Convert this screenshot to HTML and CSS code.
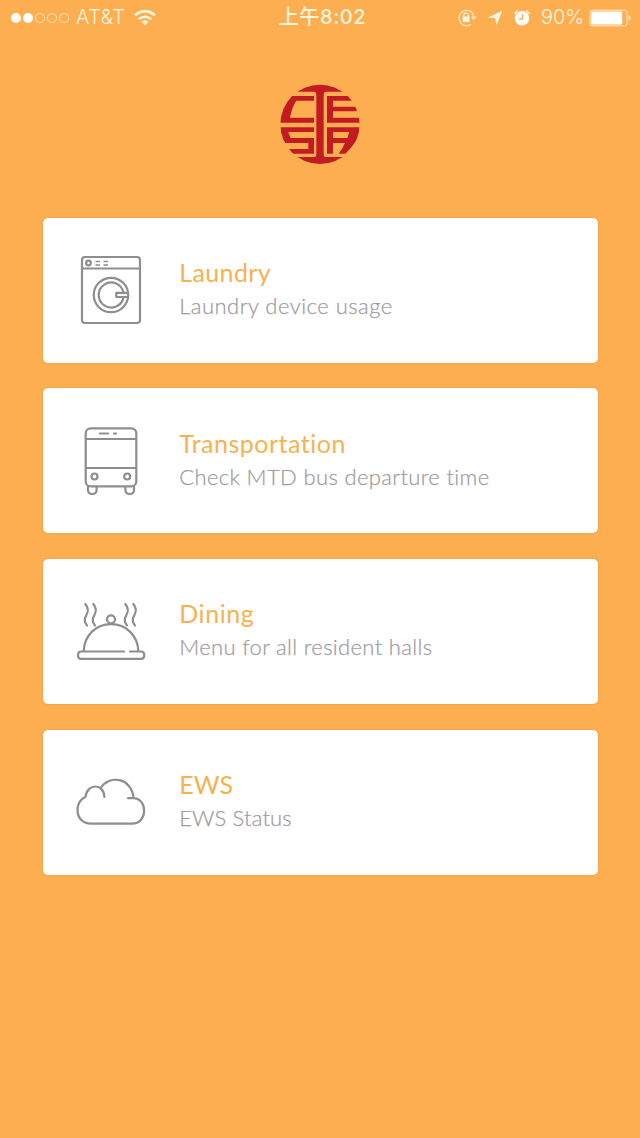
FILE: index.html
```html
<!DOCTYPE html>
<html lang="en">
<head>
<meta charset="utf-8">
<title>Campus services</title>
<link rel="stylesheet" href="styles.css">
</head>
<body>
<header class="status">
  <div class="side left">
    <svg class="signal" width="60" height="12" viewBox="0 0 60 12"><g fill="#fff"><circle cx="6" cy="6" r="5"/><circle cx="18" cy="6" r="5"/></g><g fill="none" stroke="#ffe6bd" stroke-width="1"><circle cx="30" cy="6" r="4.6"/><circle cx="42" cy="6" r="4.6"/><circle cx="54" cy="6" r="4.6"/></g></svg>
    <span class="carrier">AT&amp;T</span>
    <svg class="wifi" width="24" height="18" viewBox="0 0 24 18"><g fill="none" stroke="#fff5df" stroke-width="2.5"><path d="M2 6.2Q12-1.9 22 6.2M5.6 10.3Q12 5.2 18.4 10.3"/></g><path d="M8.4 12.8Q12 9.8 15.6 12.8L12 16.4Z" fill="#fff5df"/></svg>
  </div>
  <div class="time">上午8:02</div>
  <div class="side right">
    <svg class="lock" width="22" height="20" viewBox="0 0 22 20"><path d="M15 3.6A7.7 7.7 0 1 0 15 16.4M15 3.6Q17.7 5.7 17.6 9" fill="none" stroke="#ffebc9" stroke-width="1.3"/><path d="M14.8 8.5h6L17.8 12Z" fill="#ffebc9"/><path d="M6.5 8.5h7v5.5h-7Z" fill="#fff5df"/><path d="M7.8 9V7.2a2.2 2.2 0 0 1 4.4 0V9" fill="none" stroke="#fff5df" stroke-width="1.2"/></svg>
    <svg class="arrow" width="16" height="16" viewBox="0 0 16 16"><path d="M15.5 .5L9.6 15.3 8.3 8.3.5 7.7Z" fill="#fff5df"/></svg>
    <svg class="alarm" width="18" height="18" viewBox="0 0 18 18"><circle cx="9" cy="9.3" r="7.2" fill="#fff"/><path d="M1.3 4.8L4.8 1.5M13.2 1.5l3.5 3.3" stroke="#fff5df" stroke-width="1.4"/><path d="M9.5 5v5H6" fill="none" stroke="#fdae50" stroke-width="1.3"/></svg>
    <span class="percent">90%</span>
    <svg class="battery" width="43" height="18" viewBox="0 0 43 18"><rect x="1" y="1.2" width="37" height="15.6" rx="2.2" fill="none" stroke="#ffebc9"/><rect x="2.2" y="2.6" width="31" height="12.8" rx=".8" fill="#fff"/><path d="M39.7 6q4 3 0 6Z" fill="#fff5df"/></svg>
  </div>
</header>
<svg class="logo" width="100" height="100" viewBox="0 0 300 300">
  <defs><clipPath id="disc"><circle cx="150" cy="148" r="119"/></clipPath></defs>
  <g clip-path="url(#disc)" fill="#c21b22">
    <path d="M30 28H270V50H168Q161 50 161 60V236Q161 246 168 246H270V270H30V246H132Q139 246 139 236V60Q139 50 132 50H30Z"/>
    <path d="M30 63H132V77H79Q66 96 60 128H132V143H30Z"/>
    <path d="M171 63H270V77H189V95H260V109H189V128H270V143H171Z"/>
    <path d="M30 157H132V171H55L62 189H132V236H64L50 222H115V204H30Z"/>
    <path d="M171 157H270V172Q262 202 226 236H206Q218 221 225 204H189V236H171ZM189 171V189H232L238 171Z" fill-rule="evenodd"/>
  </g>
</svg>
<main class="cards">
  <section class="card">
    <svg class="icon" viewBox="0 0 85 90"><rect x="12" y="12" width="58" height="66" rx="3"/><path d="M12 23.5H70"/><path class="fine" d="M25.5 16.5h4.5M25.5 20h4.5M33.5 16.5h4.5M33.5 20h4.5"/><circle cx="18.5" cy="18" r="2.3"/><circle cx="41" cy="50" r="17.2"/><path d="M53.5 47.8A12.5 12.5 0 1 0 53.5 52.2M57 47.8H46.3v4.2H57.8"/></svg>
    <div class="copy"><h2 class="t-laundry">Laundry</h2><p class="s-laundry">Laundry device usage</p></div>
  </section>
  <section class="card">
    <svg class="icon" viewBox="0 0 85 90"><rect x="15.7" y="12.3" width="50.6" height="58" rx="5"/><path d="M16 23H66M16 52H66M30 17.5H38M44 17.5h2M18 70v4q0 4 4.3 4t4.3-4V71M55.4 71v3q0 4 4.3 4t4.3-4V70"/><circle cx="24.5" cy="60.5" r="3"/><circle cx="57.2" cy="60.5" r="3"/></svg>
    <div class="copy"><h2 class="t-transport">Transportation</h2><p class="s-transport">Check MTD bus departure time</p></div>
  </section>
  <section class="card">
    <svg class="icon" viewBox="0 0 85 90"><g transform="translate(0 4)"><path d="M54 61.5H11q-3 0-3 3.7t3 3.7H71q3.3 0 3.3-3.7t-3.3-3.7H60M13.7 61C14.5 45 26 34.2 41 34.2S67.5 45 68.4 61"/><circle cx="41" cy="29.3" r="4"/><path d="M15.3 14q4.5 5.5 1.1 11t.6 10.5M23.3 14q4.5 5.5 1.1 11t.6 10.5M55.3 14q4.5 5.5 1.1 11t.6 10.5M63.3 14q4.5 5.5 1.1 11t.6 10.5"/></g></svg>
    <div class="copy"><h2 class="t-dining">Dining</h2><p class="s-dining">Menu for all resident halls</p></div>
  </section>
  <section class="card">
    <svg class="icon" viewBox="0 0 85 90"><g transform="translate(0 8)"><path d="M34.4 32C34 18 17 18 15.5 32C4 36 4 58.7 21 58.7H62C78 58.7 78 33.2 63 33.2H58M63.5 32.5C61.5 12.5 39 9.5 30.7 23"/></g></svg>
    <div class="copy"><h2 class="t-ews">EWS</h2><p class="s-ews">EWS Status</p></div>
  </section>
</main>
</body>
</html>
```
FILE: styles.css
```css
* { box-sizing: border-box; }
body {
  margin: 0;
  width: 640px;
  height: 1138px;
  overflow: hidden;
  background: #fdae50;
  font-family: Lato, "Noto Sans CJK SC", sans-serif;
}
.status {
  display: grid;
  grid-template-columns: 1fr auto 1fr;
  align-items: center;
  height: 35px;
  padding: 0 8px 0 10px;
  color: #fff5df;
  font: 20px/35px Inter, "Noto Sans CJK SC", sans-serif;
}
.side { display: flex; align-items: center; }
.right { justify-content: flex-end; }
.carrier { margin: 0 8px 0 6px; font-weight: 300; letter-spacing: .4px; }
.time { margin-left: 3px; font-weight: 500; letter-spacing: .6px; }
.arrow { margin-left: 9px; }
.alarm { margin-left: 10px; }
.percent { margin: 0 5px 0 10px; font-weight: 300; }
.logo { display: block; margin: 40px 0 0 270px; }
.cards {
  display: flex;
  flex-direction: column;
  gap: 25.7px;
  margin: 42.5px 42.5px 0;
}
.card {
  display: flex;
  align-items: center;
  height: 145px;
  padding-left: 27.5px;
  border-radius: 5px;
  background: #fff;
  box-shadow: 0 0 2px #d89445;
}
.icon {
  width: 85px;
  height: 90px;
  fill: none;
  stroke: #8e8e8e;
  stroke-width: 2.2;
  stroke-linecap: round;
  stroke-linejoin: round;
}
.fine { stroke-width: 1.7; stroke-linecap: butt; }
.copy {
  margin: -2px 0 0 24.2px;
  white-space: nowrap;
  font-variant-ligatures: none;
}
h2 {
  margin: 0;
  color: #f8b14f;
  font-size: 25px;
  font-weight: 400;
  line-height: 34px;
}
p {
  margin: 0;
  color: #9b989c;
  font-size: 22px;
  font-weight: 300;
  line-height: 34px;
  -webkit-text-stroke: .25px #a7a4a8;
}
.t-laundry { letter-spacing: .4px; }
.t-transport { letter-spacing: .5px; }
.t-dining { letter-spacing: .6px; }
.s-laundry { letter-spacing: .48px; }
.s-transport { letter-spacing: .36px; }
.s-dining { letter-spacing: .34px; }
.s-ews { letter-spacing: .15px; }
```
